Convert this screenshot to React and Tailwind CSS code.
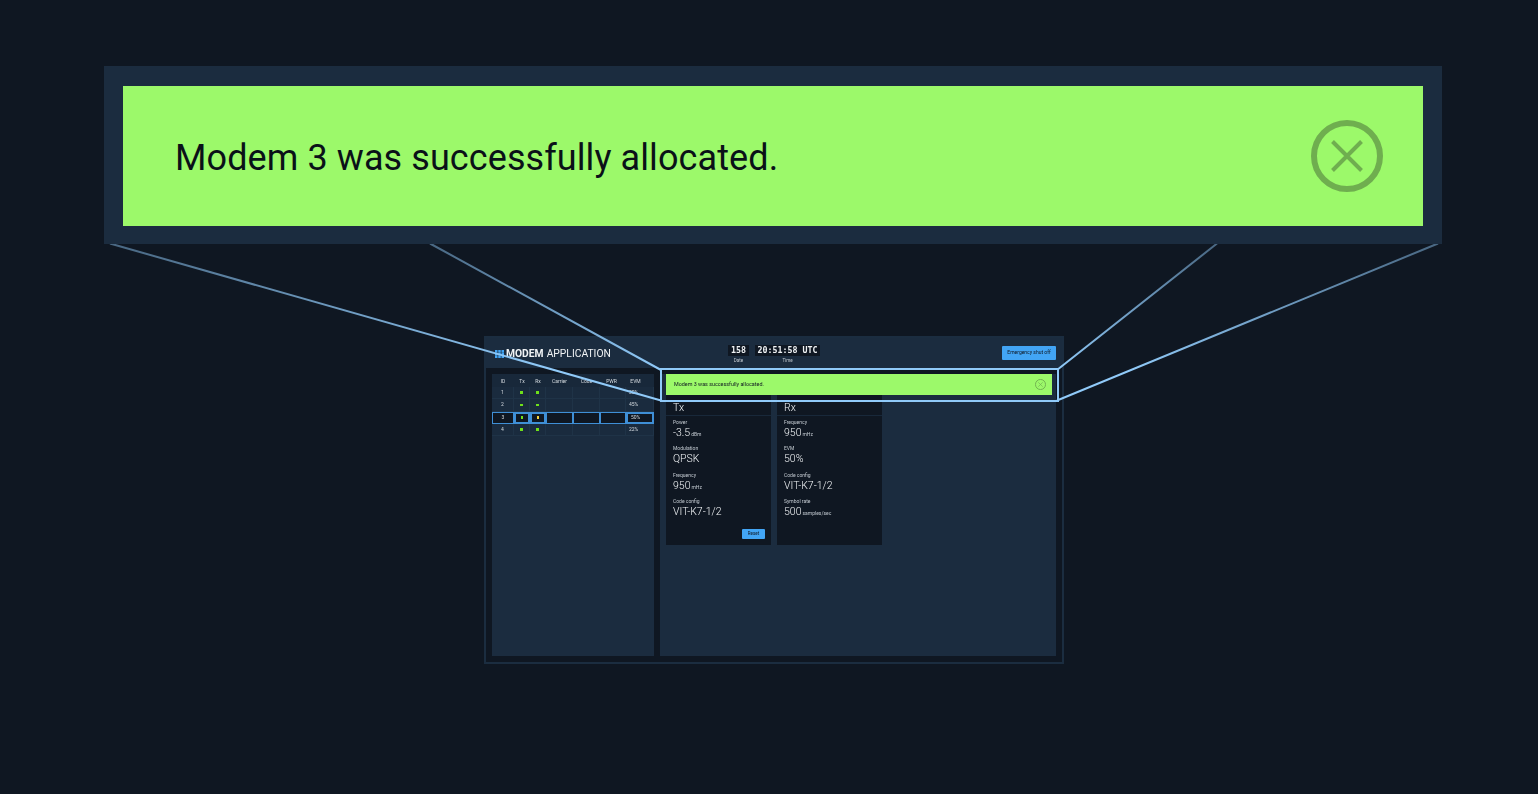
const columns = ['ID', 'Tx', 'Rx', 'Carrier', 'Code', 'PWR', 'EVM'];

const rows = [
  { id: 1, evm: '30%', rx: '#6fe01a' },
  { id: 2, evm: '45%', rx: '#6fe01a' },
  { id: 3, evm: '50%', rx: '#f5d33c', selected: true },
  { id: 4, evm: '22%', rx: '#6fe01a' },
];

const txFields = [
  { label: 'Power', value: '-3.5', unit: 'dBm' },
  { label: 'Modulation', value: 'QPSK' },
  { label: 'Frequency', value: '950', unit: 'mHz' },
  { label: 'Code config', value: 'VIT-K7-1/2' },
];

const rxFields = [
  { label: 'Frequency', value: '950', unit: 'mHz' },
  { label: 'EVM', value: '50%' },
  { label: 'Code config', value: 'VIT-K7-1/2' },
  { label: 'Symbol rate', value: '500', unit: 'samples/sec' },
];

function CloseIcon({ className }) {
  return (
    <svg className={className} viewBox="0 0 72 72" fill="none" stroke="#6fae4f">
      <circle cx="36" cy="36" r="33" strokeWidth="6" />
      <path d="M21.500 21.500 50.500 50.500M50.500 21.500 21.500 50.500" strokeWidth="4" />
    </svg>
  );
}

function Field({ label, value, unit }) {
  return (
    <div className="h-[26.300px]">
      <div className="text-[5px] leading-[7px] text-[#c3cad1]">{label}</div>
      <div className="flex items-baseline gap-[1px] text-[10.500px] font-light leading-[13px] text-[#f0f3f5]">
        {value}
        {unit && <span className="text-[5px] font-normal text-[#c3cad1]">{unit}</span>}
      </div>
    </div>
  );
}

function ModemCard({ title, fields, reset }) {
  return (
    <div className="relative h-[150px] w-[105px] bg-[#0f1722]">
      <div className="flex h-[21px] items-end border-b border-[#18283a] px-[7px] pb-[1px] text-[10.500px] font-light leading-[13px] text-[#f0f3f5]">
        {title}
      </div>
      <div className="px-[7px] pt-[3px]">
        {fields.map((f) => (
          <Field key={f.label} {...f} />
        ))}
      </div>
      {reset && (
        <div className="absolute bottom-[6px] right-[6px] flex h-[10px] w-[23px] items-center justify-center rounded-[1px] bg-[#42a5f5] text-[4.500px] text-[#0f1722]">
          Reset
        </div>
      )}
    </div>
  );
}

function ModemTable() {
  const grid = 'grid grid-cols-[22px_16px_16px_27px_27px_26px_28px]';
  return (
    <div className="w-[162px] text-[5px] text-[#d5dbe0]">
      <div className={`${grid} h-[13px] items-center bg-[#18283a] pt-[3px] text-center`}>
        {columns.map((c) => (
          <div key={c} className={c === 'PWR' ? 'pr-[3px]' : c === 'EVM' ? 'pr-[9px]' : ''}>{c}</div>
        ))}
      </div>
      {rows.map((r) => (
        <div key={r.id} className={`${grid} h-[12.300px] items-stretch`}>
          {columns.map((c) => {
            const thick = c === 'Tx' || c === 'Rx' || c === 'EVM';
            const base = r.selected
              ? `${thick ? 'border-2' : 'border'} border-[#3f8fd6] bg-[#0f1722]`
              : 'border-r border-b border-[#1f3347] bg-[#1a2b3e]';
            return (
              <div key={c} className={`flex items-center ${c === 'EVM' ? 'justify-start pl-[3px]' : 'justify-center'} ${base}`}>
                {c === 'ID' && r.id}
                {c === 'Tx' && <span className="h-[2.500px] w-[2.500px] bg-[#6fe01a]" />}
                {c === 'Rx' && <span className="h-[2.500px] w-[2.500px]" style={{ backgroundColor: r.rx }} />}
                {c === 'EVM' && r.evm}
              </div>
            );
          })}
        </div>
      ))}
    </div>
  );
}

function AppMock() {
  return (
    <div className="absolute left-[484px] top-[336px] h-[328px] w-[580px] border-2 border-[#1b2d40] bg-[#0f1722] blur-[0.3px]">
      {/* header */}
      <div className="relative flex h-[30px] items-center justify-between bg-[#1b2c3f] pl-[9px] pr-[6px]">
        <div className="flex items-center gap-[2px] pt-[2px] text-[10.300px] leading-none text-[#f0f3f5]">
          <svg className="h-[8px] w-[9px]" viewBox="0 0 9 8" fill="#42a5f5">
            <path d="M0 0h2.500v2.500H0zM3.250 0h2.500v2.500h-2.500zM6.500 0H9v2.500H6.500zM0 2.750h2.500v2.500H0zM3.250 2.750h2.500v2.500h-2.500zM6.500 2.750H9v2.500H6.500zM0 5.500h2.500V8H0zM3.250 5.500h2.500V8h-2.500zM6.500 5.500H9V8H6.500z" />
          </svg>
          <span className="font-bold">MODEM</span>
          <span className="ml-[1px]">APPLICATION</span>
        </div>
        <div className="absolute left-[242px] top-[7px] flex gap-[6px] text-center">
          <div className="w-[21px]">
            <div className="bg-[#0f1722] font-['DejaVu_Sans_Mono',monospace] text-[8.300px] font-bold leading-[11px] text-[#f0f3f5]">158</div>
            <div className="text-[4.500px] leading-[9px] text-[#c3cad1]">Date</div>
          </div>
          <div className="w-[65px]">
            <div className="bg-[#0f1722] font-['DejaVu_Sans_Mono',monospace] text-[8.300px] font-bold leading-[11px] text-[#f0f3f5]">20:51:58 UTC</div>
            <div className="text-[4.500px] leading-[9px] text-[#c3cad1]">Time</div>
          </div>
        </div>
        <div className="flex h-[14px] w-[54px] items-center justify-center rounded-[1px] bg-[#42a5f5] text-[5px] text-[#0f1722]">
          Emergency shut off
        </div>
      </div>
      {/* panels */}
      <div className="flex gap-[6px] pl-[6px] pt-[6px]">
        <div className="h-[282px] w-[162px] bg-[#1b2c3f]">
          <ModemTable />
        </div>
        <div className="h-[282px] w-[396px] bg-[#1b2c3f] pl-[6px]">
          <div className="flex h-[21px] w-[386px] items-center justify-between bg-[#9cf96a] pl-[8px] pr-[6px] text-[5.400px] text-[#0f1722]">
            Modem 3 was successfully allocated.
            <CloseIcon className="h-[11px] w-[11px]" />
          </div>
          <div className="flex gap-[6px]">
            <ModemCard title="Tx" fields={txFields} reset />
            <ModemCard title="Rx" fields={rxFields} />
          </div>
        </div>
      </div>
    </div>
  );
}

export default function App() {
  return (
    <div className="relative h-[794px] w-[1538px] overflow-hidden bg-[#0f1722] font-['Roboto',sans-serif]">
      <AppMock />

      {/* zoom guide lines and outline over the mock */}
      <svg className="absolute left-0 top-0 h-[794px] w-[1538px]" viewBox="0 0 1538 794" fill="none" strokeWidth="2">
        <defs>
          <linearGradient id="fade" gradientUnits="userSpaceOnUse" x1="0" y1="244" x2="0" y2="370">
            <stop offset="0" stopColor="#90caf9" stopOpacity="0.45" />
            <stop offset="1" stopColor="#90caf9" />
          </linearGradient>
        </defs>
        <path d="M110 243.500 661 400.500M430 243.500 661 370" stroke="url(#fade)" />
        <path d="M1217 243.500 1057 370M1438 243.500 1057 400.500" stroke="url(#fade)" />
        <rect x="661" y="369" width="397" height="32" stroke="#90caf9" />
      </svg>

      {/* enlarged notification */}
      <div className="absolute left-[104px] top-[66px] h-[178px] w-[1338px] bg-[#1b2c3f] px-[19px] pb-[18px] pt-[20px]">
        <div className="flex h-[140px] items-center justify-between bg-[#9cf96a] pl-[52px] pr-[40px] text-[36px] text-[#0a1118]">
          <span className="pt-[4px] tracking-[0.09px]">Modem 3 was successfully allocated.</span>
          <CloseIcon className="h-[72px] w-[72px]" />
        </div>
      </div>
    </div>
  );
}
